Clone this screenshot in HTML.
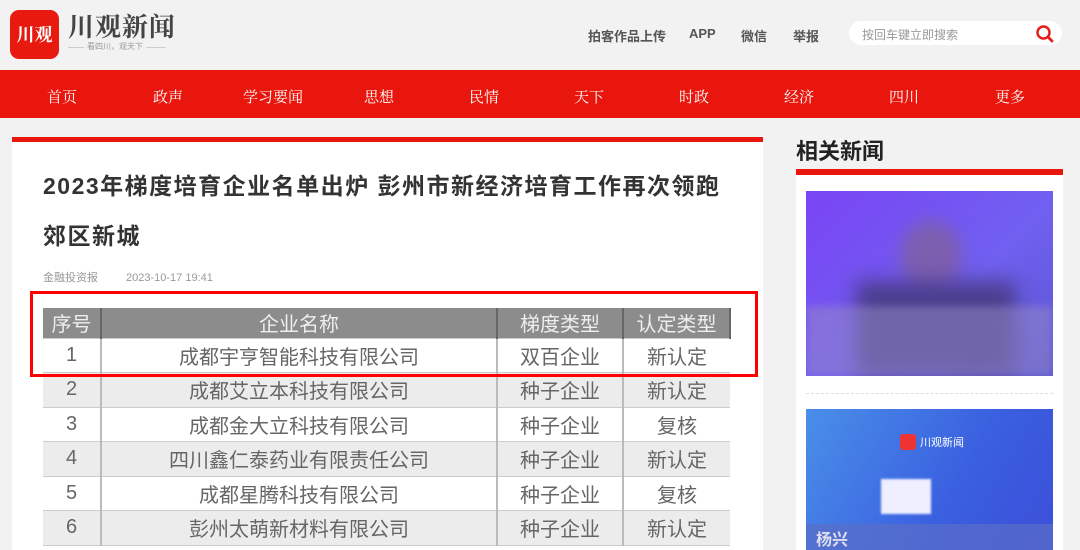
<!DOCTYPE html><html><head><meta charset="utf-8"><style>
*{margin:0;padding:0;box-sizing:border-box}
body{width:1080px;height:550px;overflow:hidden;background:#f2f2f2;font-family:"Liberation Sans","Noto Sans CJK SC",sans-serif;position:relative}
.a{position:absolute}
.nav span{position:absolute;top:86px;color:#fff;font-size:15px;font-family:"Liberation Serif","Noto Serif CJK SC",serif;transform:translateX(-50%)}
.hl{position:absolute;top:26px;font-size:13px;color:#555;font-weight:bold}
table{border-collapse:collapse;position:absolute;left:43px;top:308px;width:688px;font-size:20px;color:#666;text-align:center}
td{height:34.5px;border-right:2px solid #bbb;padding:0}
td:last-child{border-right:none}
tr.h td{background:#8c8c8c;color:#eee;height:30px;border-right:2px solid #666}
tr:nth-child(odd):not(.h) td{background:#ececec}
tr td{border-bottom:1px solid #ccc}
</style></head><body>
<div class="a" style="left:10px;top:10px;width:49px;height:49px;background:#e8190f;border-radius:9px;color:#fff;font-size:18px;font-weight:bold;text-align:center;line-height:49px;font-family:'Noto Serif CJK SC',serif">川观</div>
<div class="a" style="left:68px;top:10px;font-size:26px;font-weight:bold;color:#444;font-family:'Noto Serif CJK SC',serif;letter-spacing:1px;line-height:32px">川观新闻</div>
<div class="a" style="left:68px;top:47px;width:98px;border-top:1px solid #ccc"></div>
<div class="a" style="left:84px;top:42px;font-size:8px;line-height:10px;color:#999;background:#f2f2f2;padding:0 3px">看四川，观天下</div>
<div class="hl" style="left:588px">拍客作品上传</div>
<div class="hl" style="left:689px">APP</div>
<div class="hl" style="left:741px">微信</div>
<div class="hl" style="left:793px">举报</div>
<div class="a" style="left:849px;top:21px;width:213px;height:24px;background:#fff;border-radius:12px;font-size:12px;color:#999;padding:5px 0 0 13px">按回车键立即搜索</div>
<svg class="a" style="left:1035px;top:24px" width="20" height="20" viewBox="0 0 20 20"><circle cx="8.5" cy="8.5" r="6" fill="none" stroke="#e3201a" stroke-width="2.5"/><path d="M13 13l4 4" stroke="#e3201a" stroke-width="2.8" stroke-linecap="round"/></svg>
<div class="a nav" style="left:0;top:70px;width:1080px;height:48px;background:#e8160c">
<span style="left:62px;top:16px">首页</span><span style="left:168px;top:16px">政声</span><span style="left:273px;top:16px">学习要闻</span><span style="left:379px;top:16px">思想</span><span style="left:484px;top:16px">民情</span><span style="left:589px;top:16px">天下</span><span style="left:694px;top:16px">时政</span><span style="left:799px;top:16px">经济</span><span style="left:904px;top:16px">四川</span><span style="left:1010px;top:16px">更多</span></div>
<div class="a" style="left:12px;top:137px;width:751px;height:413px;background:#fff;border-top:5px solid #e8160c"></div>
<div class="a" style="left:43px;top:161px;width:700px;font-size:23px;letter-spacing:1.5px;font-weight:bold;color:#333;line-height:50px;white-space:nowrap">2023年梯度培育企业名单出炉 彭州市新经济培育工作再次领跑<br>郊区新城</div>
<div class="a" style="left:43px;top:269px;font-size:11px;color:#999">金融投资报<span style="margin-left:28px">2023-10-17 19:41</span></div>
<table>
<tr class="h"><td style="width:58px">序号</td><td style="width:396px">企业名称</td><td style="width:126px">梯度类型</td><td>认定类型</td></tr>
<tr><td>1</td><td>成都宇亨智能科技有限公司</td><td>双百企业</td><td>新认定</td></tr>
<tr><td>2</td><td>成都艾立本科技有限公司</td><td>种子企业</td><td>新认定</td></tr>
<tr><td>3</td><td>成都金大立科技有限公司</td><td>种子企业</td><td>复核</td></tr>
<tr><td>4</td><td>四川鑫仁泰药业有限责任公司</td><td>种子企业</td><td>新认定</td></tr>
<tr><td>5</td><td>成都星腾科技有限公司</td><td>种子企业</td><td>复核</td></tr>
<tr><td>6</td><td>彭州太萌新材料有限公司</td><td>种子企业</td><td>新认定</td></tr>
</table>
<div class="a" style="left:30px;top:291px;width:728px;height:86px;border:3px solid #f00"></div>
<div class="a" style="left:796px;top:134px;font-size:22px;font-weight:bold;color:#222">相关新闻</div>
<div class="a" style="left:796px;top:169px;width:267px;height:6px;background:#e8160c"></div>
<div class="a" style="left:796px;top:175px;width:267px;height:375px;background:#fff"></div>
<div class="a" style="left:806px;top:191px;width:247px;height:185px;background:linear-gradient(135deg,#7a44f5,#7060f0 60%,#5a55d0);overflow:hidden">
<div class="a" style="left:95px;top:30px;width:60px;height:70px;border-radius:30px;background:#7d5fb0;filter:blur(8px)"></div>
<div class="a" style="left:50px;top:90px;width:160px;height:95px;background:#4b3e8c;filter:blur(10px)"></div>
<div class="a" style="left:0;top:115px;width:247px;height:70px;background:rgba(150,140,200,.5);filter:blur(4px)"></div></div>
<div class="a" style="left:806px;top:393px;width:247px;border-top:1px dashed #ddd"></div>
<div class="a" style="left:806px;top:409px;width:247px;height:141px;background:linear-gradient(120deg,#4a8fe8,#3a5fe0 60%,#3c4fd8);overflow:hidden">
<div class="a" style="left:94px;top:25px;width:16px;height:16px;background:#e33;border-radius:3px"></div>
<div class="a" style="left:114px;top:25px;font-size:11px;color:#fff">川观新闻</div>
<div class="a" style="left:75px;top:70px;width:50px;height:35px;background:#eef;filter:blur(1px)"></div>
<div class="a" style="left:0;top:115px;width:247px;height:30px;background:rgba(90,110,200,.7)"></div>
<div class="a" style="left:10px;top:117px;font-size:16px;color:#dde;font-weight:bold">杨兴</div></div>
</body></html>
